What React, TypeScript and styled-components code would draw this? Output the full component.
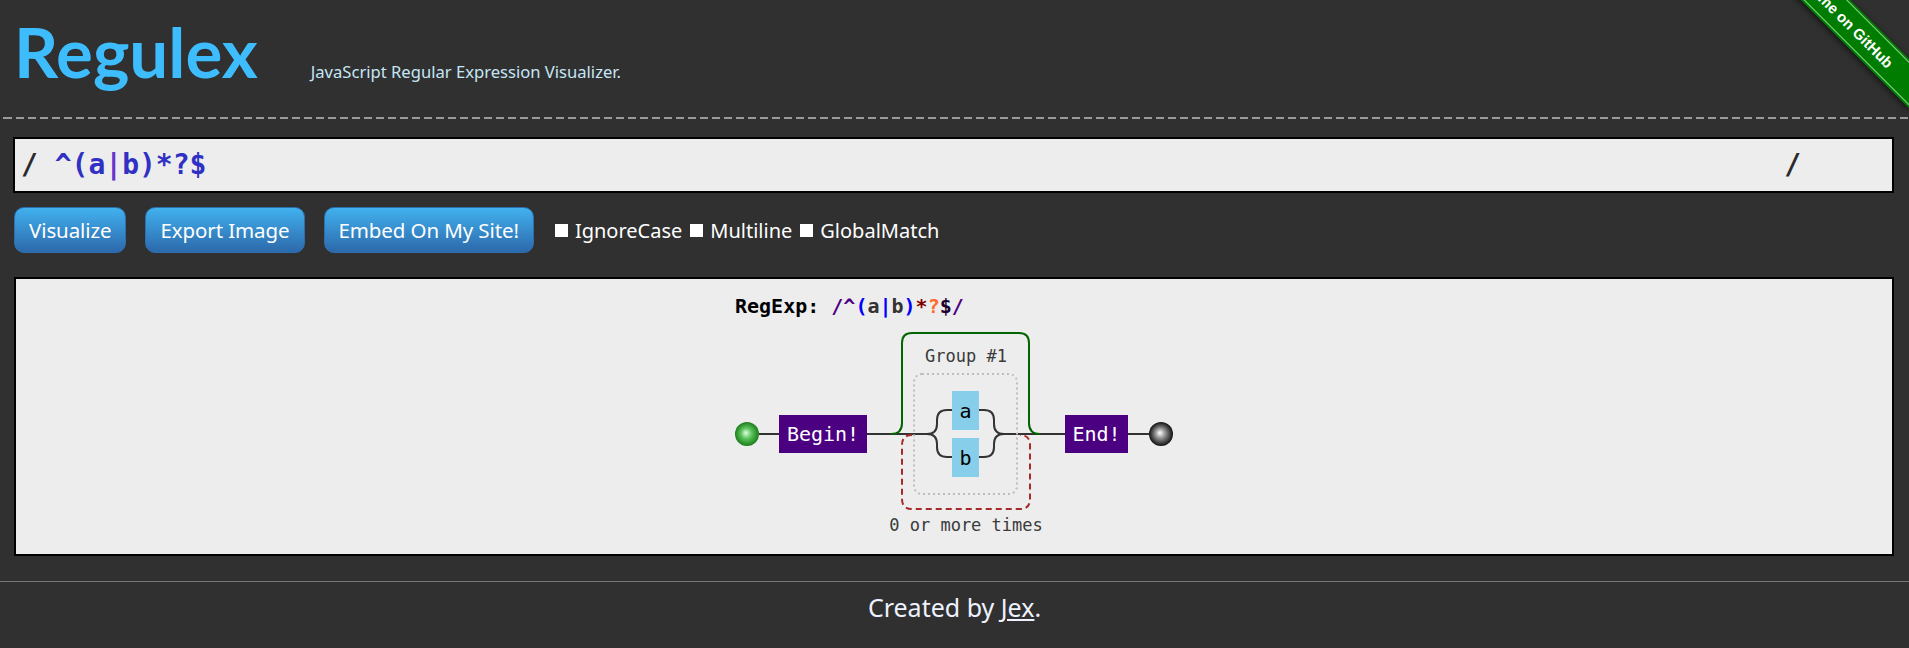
import React from "react";
import styled, { createGlobalStyle } from "styled-components";

const GlobalStyle = createGlobalStyle`
  html, body { margin: 0; padding: 0; background: #303030; }
  body { font-family: "Noto Sans", "Open Sans", sans-serif; color: #fff; }
`;

const Page = styled.div`
  position: relative;
  width: 1909px;
  height: 648px;
  overflow: hidden;
  background: #303030;
`;

const Header = styled.header`
  display: flex;
  align-items: baseline;
  height: 117px;
  padding: 12px 0 0 14px;
  box-sizing: border-box;
`;

const Title = styled.h1`
  margin: 0;
  font-family: Lato, "Noto Sans", sans-serif;
  font-weight: 700;
  font-size: 69px;
  line-height: 80px;
  color: #3dbdfd;
`;

const Subtitle = styled.span`
  margin-left: 53px;
  font-family: "Noto Sans", sans-serif;
  font-size: 16.6px;
  color: #c6e6f6;
`;

const Divider = styled.div`
  height: 2px;
  background-image: repeating-linear-gradient(to right, #9a9a9a 0 8px, transparent 8px 12px);
  background-position: 4px 0;
`;

const RegexBox = styled.div`
  margin: 18px 15px 0 13px;
  height: 56px;
  box-sizing: border-box;
  border: 2px solid #000;
  background: #ededed;
  display: flex;
  align-items: center;
  padding: 0 0 0 6px;
  font-family: "DejaVu Sans Mono", monospace;
  font-weight: 700;
  font-size: 28px;
  line-height: 1;
`;

const Slash = styled.span<{ $end?: boolean }>`
  color: #2a2a2a;
  white-space: pre;
  margin-right: ${(p) => (p.$end ? "91px" : "0")};
`;

const RegexText = styled.span`
  flex: 1;
  color: #3030c4;
  white-space: pre;
`;

const Pipe = styled.span`
  color: #6a34cc;
`;

const Toolbar = styled.div`
  display: flex;
  align-items: center;
  gap: 19px;
  margin: 14px 0 0 14px;
`;

const Button = styled.button`
  height: 46px;
  padding: 0 14px;
  border: 1px solid #2d6fae;
  border-radius: 10px;
  background: linear-gradient(#42b1ef, #2c69ab);
  color: #fff;
  font-family: "Noto Sans", sans-serif;
  font-size: 20.5px;
  letter-spacing: -0.1px;
  cursor: pointer;
`;

const Flags = styled.div`
  display: flex;
  align-items: center;
  gap: 8px;
  margin-left: 2px;
`;

const Flag = styled.label`
  display: flex;
  align-items: center;
  gap: 7px;
  font-family: "Noto Sans", sans-serif;
  font-size: 20px;
  color: #fff;
`;

const Check = styled.input`
  appearance: none;
  margin: 0;
  width: 13px;
  height: 13px;
  background: #fff;
  border: none;
`;

const Panel = styled.div`
  margin: 24px 15px 0 14px;
  height: 279px;
  box-sizing: border-box;
  border: 2px solid #000;
  background: #ededed;
  display: flex;
  justify-content: center;
`;

const Footer = styled.footer`
  margin-top: 25px;
  border-top: 1px solid #777;
  padding-top: 8px;
  text-align: center;
  font-family: "Noto Sans", sans-serif;
  font-size: 25px;
  color: #eef2ff;
`;

const FooterLink = styled.a`
  color: #eef2ff;
  text-decoration: underline;
`;

const RibbonWrap = styled.div`
  position: absolute;
  top: 0;
  right: 0;
  width: 150px;
  height: 150px;
  overflow: hidden;
`;

const Ribbon = styled.a`
  position: absolute;
  left: -26px;
  top: 0px;
  width: 220px;
  height: 35px;
  line-height: 35px;
  transform: rotate(45deg);
  background: #007d00;
  color: #fff;
  font-family: "Liberation Sans", sans-serif;
  font-weight: 700;
  font-size: 15px;
  text-align: center;
  text-decoration: none;
  box-shadow: 2px 2px 6px rgba(0, 0, 0, 0.6);
  &::before,
  &::after {
    content: "";
    position: absolute;
    left: 0;
    right: 0;
    height: 1px;
    background: rgba(170, 230, 170, 0.8);
  }
  &::before { top: 2px; }
  &::after { bottom: 2px; }
`;

const MonoText = styled.text<{ $size?: number; $bold?: boolean }>`
  font-family: "DejaVu Sans Mono", monospace;
  font-size: ${(p) => p.$size ?? 20}px;
  font-weight: ${(p) => (p.$bold ? 700 : 400)};
`;

const regexParts: { t: string; c: string }[] = [
  { t: "R", c: "#000" }, { t: "e", c: "#000" }, { t: "g", c: "#000" }, { t: "E", c: "#000" },
  { t: "x", c: "#000" }, { t: "p", c: "#000" }, { t: ":", c: "#000" },
  { t: "/", c: "#4b0082" }, { t: "^", c: "#4b0082" }, { t: "(", c: "#0000ff" }, { t: "a", c: "#333" },
  { t: "|", c: "#0000ff" }, { t: "b", c: "#333" }, { t: ")", c: "#0000ff" }, { t: "*", c: "#800000" },
  { t: "?", c: "#ff6a2a" }, { t: "$", c: "#1a0030" }, { t: "/", c: "#4b0082" },
];

const Diagram: React.FC = () => (
  <svg width={460} height={275} viewBox="724 279 460 275">
    <defs>
      <radialGradient id="gBegin" cx="0.5" cy="0.5" r="0.5" fx="0.45" fy="0.45">
        <stop offset="0" stopColor="#e2fbe2" />
        <stop offset="0.45" stopColor="#5cc45c" />
        <stop offset="1" stopColor="#1b7d1b" />
      </radialGradient>
      <radialGradient id="gEnd" cx="0.5" cy="0.5" r="0.5" fx="0.45" fy="0.45">
        <stop offset="0" stopColor="#ffffff" />
        <stop offset="0.45" stopColor="#8a8a8a" />
        <stop offset="1" stopColor="#101010" />
      </radialGradient>
    </defs>

    <MonoText y={313} $bold>
      {regexParts.map((p, i) => (
        <tspan key={i} x={735 + (i >= 7 ? i + 1 : i) * 12.04} fill={p.c}>
          {p.t}
        </tspan>
      ))}
    </MonoText>

    <g fill="none" stroke="#333" strokeWidth={2}>
      <path d="M759 434 H779" />
      <path d="M867 434 H927" />
      <path d="M927 434 Q937 434 937 424 V420 Q937 410 947 410 H952" />
      <path d="M927 434 Q937 434 937 444 V447 Q937 457 947 457 H952" />
      <path d="M979 410 H984 Q994 410 994 420 V424 Q994 434 1004 434" />
      <path d="M979 457 H984 Q994 457 994 447 V444 Q994 434 1004 434" />
      <path d="M1004 434 H1065" />
      <path d="M1128 434 H1149" />
    </g>

    <rect x={914} y={374} width={103} height={120} rx={8} fill="none" stroke="#bdbdbd" strokeWidth={2} strokeDasharray="2 3" />

    <path
      d="M891 434 Q902 434 902 423 V343 Q902 333 912 333 H1019 Q1029 333 1029 343 V423 Q1029 434 1040 434"
      fill="none"
      stroke="#006400"
      strokeWidth={2}
    />
    <path
      d="M912 435 Q902 435 902 445 V499 Q902 509 912 509 H1020 Q1030 509 1030 499 V445 Q1030 435 1020 435"
      fill="none"
      stroke="#a52a2a"
      strokeWidth={2}
      strokeDasharray="6 4"
    />

    <MonoText x={966} y={362} $size={17} fill="#3a3a3a" textAnchor="middle">Group #1</MonoText>
    <MonoText x={966} y={531} $size={17} fill="#3a3a3a" textAnchor="middle">0 or more times</MonoText>

    <circle cx={747} cy={434} r={12} fill="url(#gBegin)" />
    <rect x={779} y={415} width={88} height={38} fill="#4b0082" />
    <MonoText x={823} y={441} fill="#fff" textAnchor="middle">Begin!</MonoText>

    <rect x={952} y={391} width={27} height={39} fill="#87ceeb" />
    <MonoText x={965.5} y={418} fill="#000" textAnchor="middle">a</MonoText>
    <rect x={952} y={438} width={27} height={39} fill="#87ceeb" />
    <MonoText x={965.5} y={465} fill="#000" textAnchor="middle">b</MonoText>

    <rect x={1065} y={415} width={63} height={38} fill="#4b0082" />
    <MonoText x={1096.5} y={441} fill="#fff" textAnchor="middle">End!</MonoText>
    <circle cx={1161} cy={434} r={12} fill="url(#gEnd)" />
  </svg>
);

export default function App() {
  return (
    <Page>
      <GlobalStyle />
      <Header>
        <Title>Regulex</Title>
        <Subtitle>JavaScript Regular Expression Visualizer.</Subtitle>
      </Header>
      <Divider />
      <RegexBox>
        <Slash>/ </Slash>
        <RegexText>
          ^(a<Pipe>|</Pipe>b)*?$
        </RegexText>
        <Slash $end>/</Slash>
      </RegexBox>
      <Toolbar>
        <Button>Visualize</Button>
        <Button>Export Image</Button>
        <Button>Embed On My Site!</Button>
        <Flags>
          <Flag><Check type="checkbox" />IgnoreCase</Flag>
          <Flag><Check type="checkbox" />Multiline</Flag>
          <Flag><Check type="checkbox" />GlobalMatch</Flag>
        </Flags>
      </Toolbar>
      <Panel>
        <Diagram />
      </Panel>
      <Footer>
        Created by <FooterLink href="#">Jex</FooterLink>.
      </Footer>
      <RibbonWrap>
        <Ribbon href="#">Fork me on GitHub</Ribbon>
      </RibbonWrap>
    </Page>
  );
}
